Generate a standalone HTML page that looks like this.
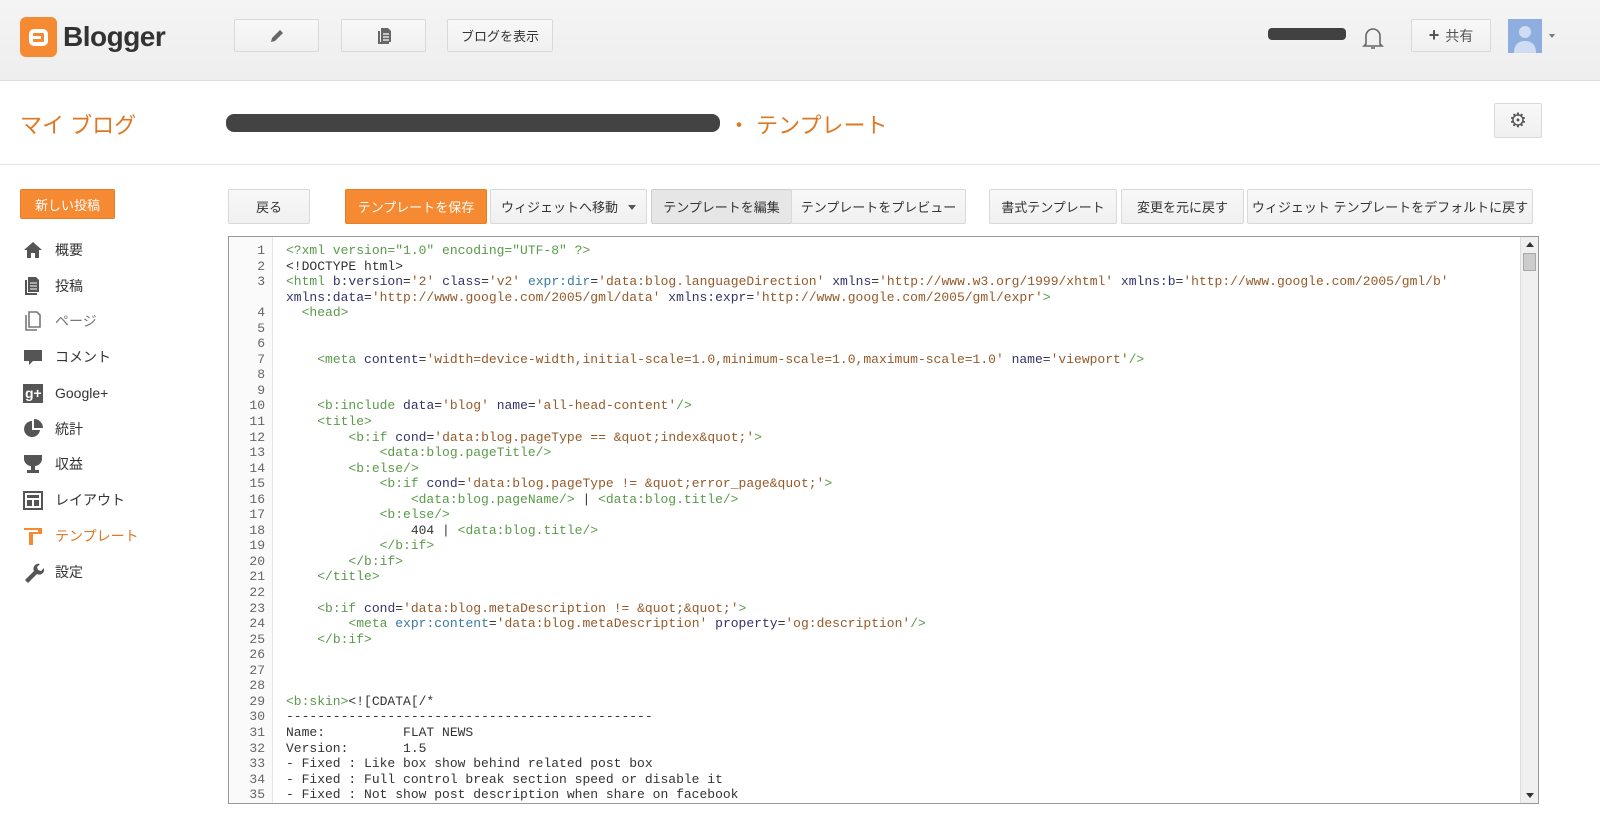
<!DOCTYPE html>
<html><head><meta charset="utf-8"><style>
*{box-sizing:border-box;margin:0;padding:0}
body{width:1600px;height:829px;overflow:hidden;background:#fff;font-family:"Liberation Sans","Noto Sans CJK JP",sans-serif;font-size:13px;color:#222;position:relative}
.top{position:absolute;left:0;top:0;width:1600px;height:81px;background:linear-gradient(#f4f4f4,#eee);border-bottom:1px solid #ddd}
.btn{position:absolute;border:1px solid #d9d9d9;background:linear-gradient(#f8f8f8,#f0f0f0);border-radius:2px;font-size:13px;color:#333;display:flex;align-items:center;justify-content:center;white-space:nowrap}
.or{background:#f68a33;border-color:#e77d27;color:#fff}
.abs{position:absolute}
.side div{position:absolute;left:22px;display:flex;align-items:center;font-size:14px;color:#333}
.side svg{width:22px;height:22px;margin-right:11px}
.code{position:absolute;left:228px;top:236px;width:1311px;height:568px;border:1px solid #999;overflow:hidden;background:#fff}
.gut{position:absolute;left:0;top:0;width:44px;height:100%;background:#fafafa;border-right:1px solid #e6e6e6}
pre{font-family:"Liberation Mono",monospace;font-size:13px;line-height:15.55px;position:absolute;top:6px;color:#333}
.ln{left:0;width:36px;text-align:right;color:#666}
.tx{left:57px}
.t{color:#5a9a4a}.a{color:#33336a}.v{color:#955a2a}.e{color:#3a7aa0}
</style></head><body>
<div class="top">
 <div class="abs" style="left:20px;top:17px;width:37px;height:40px;background:#f68a33;border-radius:6px"></div>
 <div class="abs" style="left:29px;top:29px;width:19px;height:17px;border:4px solid #fff;border-radius:5px"></div>
 <div class="abs" style="left:33px;top:36px;width:8px;height:3px;background:#fff"></div>
 <div class="abs" style="left:63px;top:21px;font-size:28px;font-weight:bold;color:#333;letter-spacing:-0.5px">Blogger</div>
 <div class="btn" style="left:234px;top:19px;width:85px;height:33px"><svg width="18" height="18" viewBox="0 0 18 18"><path d="M3 15l1-4 8-8 3 3-8 8z" fill="#666"/></svg></div>
 <div class="btn" style="left:341px;top:19px;width:85px;height:33px"><svg width="18" height="18" viewBox="0 0 18 18"><path d="M3 4h2v11h9v2H3z M6 1h7l3 3v11H6z" fill="#666"/><path d="M8 7h6M8 10h6M8 13h6" stroke="#fff" stroke-width="1.2"/></svg></div>
 <div class="btn" style="left:447px;top:19px;width:106px;height:33px">ブログを表示</div>
 <div class="abs" style="left:1268px;top:28px;width:78px;height:12px;background:#222;border-radius:4px;opacity:.85"></div>
 <svg class="abs" style="left:1361px;top:24px" width="24" height="28" viewBox="0 0 24 28"><path d="M5 20V12a7 7 0 0114 0v8l2 2H3z M10 24h4" fill="none" stroke="#666" stroke-width="1.6"/></svg>
 <div class="btn" style="left:1411px;top:19px;width:80px;height:33px;color:#555;font-size:14px"><b style="font-size:18px;margin-right:6px">+</b>共有</div>
 <div class="abs" style="left:1508px;top:19px;width:34px;height:34px;background:#8eaee0"><svg width="34" height="34" viewBox="0 0 34 34"><circle cx="17" cy="13" r="6" fill="#cfdcf2"/><path d="M6 34c0-9 5-12 11-12s11 3 11 12z" fill="#cfdcf2"/></svg></div>
 <div class="abs" style="left:1549px;top:34px;border:3px solid transparent;border-top:4px solid #777"></div>
</div>
<div class="abs" style="left:20px;top:108px;font-size:22px;color:#dd7722">マイ ブログ</div>
<div class="abs" style="left:226px;top:114px;width:494px;height:18px;background:#222;border-radius:8px;opacity:.85"></div>
<div class="abs" style="left:728px;top:108px;font-size:22px;color:#dd7722">・ テンプレート</div>
<div class="btn" style="left:1494px;top:103px;width:48px;height:35px;font-size:20px;color:#555">⚙</div>
<div class="abs" style="left:0;top:164px;width:1600px;height:1px;background:#e5e5e5"></div>
<div class="btn or" style="left:20px;top:189px;width:95px;height:30px">新しい投稿</div>
<div class="side">
 <div style="top:239px"><svg viewBox="0 0 22 22"><path d="M11 3l9 8h-3v8h-4v-5H9v5H5v-8H2z" fill="#555"/></svg>概要</div>
 <div style="top:275px"><svg viewBox="0 0 22 22"><path d="M3 5h2v13h10v2H3zM6 2h8l3 3v12H6z" fill="#555"/><path d="M8 8h7M8 11h7M8 14h7" stroke="#fff"/></svg>投稿</div>
 <div style="top:310px;color:#777"><svg viewBox="0 0 22 22"><path d="M4 5v15h11M7 2h8l3 3v12H7z" fill="none" stroke="#777" stroke-width="1.6"/></svg>ページ</div>
 <div style="top:346px"><svg viewBox="0 0 22 22"><path d="M2 4h18v11h-9l-4 4v-4H2z" fill="#555"/></svg>コメント</div>
 <div style="top:382px"><svg viewBox="0 0 22 22"><rect x="1" y="2" width="20" height="19" fill="#555"/><text x="3" y="16" font-size="14" fill="#fff" font-family="Liberation Sans" font-weight="bold">g+</text></svg>Google+</div>
 <div style="top:418px"><svg viewBox="0 0 22 22"><path d="M10 3a8 8 0 108 9h-8z M12 1v9h9a9 9 0 00-9-9z" fill="#555"/></svg>統計</div>
 <div style="top:453px"><svg viewBox="0 0 22 22"><path d="M2 2h18v4c0 4-4 7-7 7v4h4v3H5v-3h4v-4c-3 0-7-3-7-7z" fill="#555"/></svg>収益</div>
 <div style="top:489px"><svg viewBox="0 0 22 22"><rect x="2" y="3" width="18" height="17" fill="none" stroke="#555" stroke-width="2"/><rect x="5" y="6" width="12" height="3" fill="#555"/><rect x="5" y="11" width="5" height="6" fill="#555"/><rect x="12" y="11" width="5" height="6" fill="#555"/></svg>レイアウト</div>
 <div style="top:525px;color:#dd7722"><svg viewBox="0 0 22 22"><path d="M2 3h18v6H11v11H7V7h9V5H2z" fill="#f68a33"/></svg>テンプレート</div>
 <div style="top:561px"><svg viewBox="0 0 22 22"><path d="M3 19l9-9a5 5 0 016-7l-3 3 1 3 3 1 3-3a5 5 0 01-7 6l-9 9z" fill="#555"/></svg>設定</div>
</div>
<div class="btn" style="left:228px;top:189px;width:82px;height:35px">戻る</div>
<div class="btn or" style="left:345px;top:189px;width:142px;height:35px">テンプレートを保存</div>
<div class="btn" style="left:490px;top:189px;width:157px;height:35px">ウィジェットへ移動 <span style="margin-left:10px;border:4px solid transparent;border-top:5px solid #555;margin-top:5px"></span></div>
<div class="btn" style="left:651px;top:189px;width:141px;height:35px;background:#e6e6e6;border-color:#ccc">テンプレートを編集</div>
<div class="btn" style="left:791px;top:189px;width:175px;height:35px">テンプレートをプレビュー</div>
<div class="btn" style="left:989px;top:189px;width:128px;height:35px">書式テンプレート</div>
<div class="btn" style="left:1121px;top:189px;width:123px;height:35px">変更を元に戻す</div>
<div class="btn" style="left:1247px;top:189px;width:286px;height:35px">ウィジェット テンプレートをデフォルトに戻す</div>
<div class="code">
<div class="gut"></div>
<pre class="ln">1
2
3

4
5
6
7
8
9
10
11
12
13
14
15
16
17
18
19
20
21
22
23
24
25
26
27
28
29
30
31
32
33
34
35
36</pre>
<pre class="tx"><span class="t">&lt;?xml version="1.0" encoding="UTF-8" ?&gt;</span>
&lt;!DOCTYPE html&gt;
<span class="t">&lt;html</span> <span class="a">b:version</span>=<span class="v">'2'</span> <span class="a">class</span>=<span class="v">'v2'</span> <span class="e">expr:dir</span>=<span class="v">'data:blog.languageDirection'</span> <span class="a">xmlns</span>=<span class="v">'http://www.w3.org/1999/xhtml'</span> <span class="a">xmlns:b</span>=<span class="v">'http://www.google.com/2005/gml/b'</span>
<span class="a">xmlns:data</span>=<span class="v">'http://www.google.com/2005/gml/data'</span> <span class="a">xmlns:expr</span>=<span class="v">'http://www.google.com/2005/gml/expr'</span><span class="t">&gt;</span>
  <span class="t">&lt;head&gt;</span>


    <span class="t">&lt;meta</span> <span class="a">content</span>=<span class="v">'width=device-width,initial-scale=1.0,minimum-scale=1.0,maximum-scale=1.0'</span> <span class="a">name</span>=<span class="v">'viewport'</span><span class="t">/&gt;</span>


    <span class="t">&lt;b:include</span> <span class="a">data</span>=<span class="v">'blog'</span> <span class="a">name</span>=<span class="v">'all-head-content'</span><span class="t">/&gt;</span>
    <span class="t">&lt;title&gt;</span>
        <span class="t">&lt;b:if</span> <span class="a">cond</span>=<span class="v">'data:blog.pageType == &amp;quot;index&amp;quot;'</span><span class="t">&gt;</span>
            <span class="t">&lt;data:blog.pageTitle/&gt;</span>
        <span class="t">&lt;b:else/&gt;</span>
            <span class="t">&lt;b:if</span> <span class="a">cond</span>=<span class="v">'data:blog.pageType != &amp;quot;error_page&amp;quot;'</span><span class="t">&gt;</span>
                <span class="t">&lt;data:blog.pageName/&gt;</span> | <span class="t">&lt;data:blog.title/&gt;</span>
            <span class="t">&lt;b:else/&gt;</span>
                404 | <span class="t">&lt;data:blog.title/&gt;</span>
            <span class="t">&lt;/b:if&gt;</span>
        <span class="t">&lt;/b:if&gt;</span>
    <span class="t">&lt;/title&gt;</span>

    <span class="t">&lt;b:if</span> <span class="a">cond</span>=<span class="v">'data:blog.metaDescription != &amp;quot;&amp;quot;'</span><span class="t">&gt;</span>
        <span class="t">&lt;meta</span> <span class="e">expr:content</span>=<span class="v">'data:blog.metaDescription'</span> <span class="a">property</span>=<span class="v">'og:description'</span><span class="t">/&gt;</span>
    <span class="t">&lt;/b:if&gt;</span>



<span class="t">&lt;b:skin&gt;</span>&lt;![CDATA[/*
-----------------------------------------------
Name:          FLAT NEWS
Version:       1.5
- Fixed : Like box show behind related post box
- Fixed : Full control break section speed or disable it
- Fixed : Not show post description when share on facebook
- Fixed : Wrong description for home page</pre>
<div class="abs" style="right:0;top:0;width:18px;height:100%;background:#f0f0f0;border-left:1px solid #ddd">
 <div class="abs" style="left:5px;top:5px;border:4px solid transparent;border-bottom:5px solid #333;border-top:0"></div>
 <div class="abs" style="left:2px;top:16px;width:13px;height:18px;background:#ccc;border:1px solid #aaa"></div>
 <div class="abs" style="left:5px;bottom:5px;border:4px solid transparent;border-top:5px solid #333;border-bottom:0"></div>
</div>
</div>
</body></html>
